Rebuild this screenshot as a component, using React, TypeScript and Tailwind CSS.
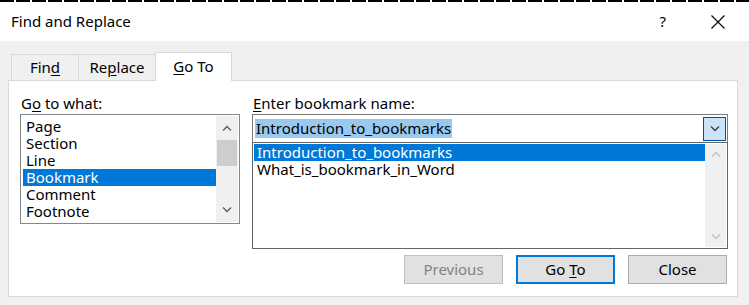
import React from "react";

const font = "font-['Segoe_UI','Noto_Sans','Open_Sans',sans-serif]";

function ChevUp({ color }: { color: string }) {
  return (
    <svg width="10" height="6" viewBox="0 0 10 6" fill="none">
      <path d="M1 5.5 L5 1.5 L9 5.5" stroke={color} strokeWidth="1.4" />
    </svg>
  );
}
function ChevDown({ color }: { color: string }) {
  return (
    <svg width="10" height="6" viewBox="0 0 10 6" fill="none">
      <path d="M1 0.5 L5 4.5 L9 0.5" stroke={color} strokeWidth="1.4" />
    </svg>
  );
}

export default function App() {
  const leftItems = ["Page", "Section", "Line", "Bookmark", "Comment", "Footnote"];
  return (
    <div className={`w-[749px] h-[305px] bg-[#f0f0f0] overflow-hidden text-[15px] text-black leading-none ${font}`}>
      {/* title bar */}
      <div className="h-[2px] bg-[repeating-linear-gradient(90deg,#000_0_14px,#fff_14px_16px)]" />
      <div className="h-[39px] bg-white flex items-center pl-[11px]">
        <span className="text-[15px]">Find and Replace</span>
        <span className="ml-auto mr-[45px] text-[15px]">?</span>
        <svg className="mr-[24px]" width="14" height="14" viewBox="0 0 14 14">
          <path d="M0.5 0.5 L13.5 13.5 M13.5 0.5 L0.5 13.5" stroke="#000" strokeWidth="1.1" />
        </svg>
      </div>

      {/* tabs */}
      <div className="mt-[11px] ml-[11px] flex items-end h-[28px] relative z-10">
        <div className="w-[68px] h-[26px] border border-b-0 border-[#d9d9d9] flex items-center justify-center">
          <span>Fin<span className="underline underline-offset-2">d</span></span>
        </div>
        <div className="w-[77px] h-[26px] border border-l-0 border-b-0 border-[#d9d9d9] flex items-center justify-center">
          <span>Re<span className="underline underline-offset-2">p</span>lace</span>
        </div>
        <div className="w-[77px] h-[29px] -mb-px -ml-px border border-b-0 border-[#d9d9d9] bg-white flex items-center justify-center pb-[2px]">
          <span><span className="underline underline-offset-2">G</span>o To</span>
        </div>
      </div>

      {/* panel */}
      <div className="ml-[8px] w-[730px] h-[217px] bg-white border border-[#d9d9d9] pl-[11px] pr-[9px] pt-[15px] flex flex-col">
        <div className="flex gap-[12px]">
          {/* left column */}
          <div className="w-[220px] flex flex-col">
            <div className="h-[18px] pl-[1px]">
              G<span className="underline underline-offset-2">o</span> to what:
            </div>
            <div className="h-[110px] border border-[#828790] flex">
              <div className="flex-1 pt-[3px] pl-[2px]">
                {leftItems.map((t) => (
                  <div
                    key={t}
                    className={`h-[17px] flex items-center pl-[3px] ${t === "Bookmark" ? "bg-[#0078d7] text-white" : ""}`}
                  >
                    {t}
                  </div>
                ))}
              </div>
              <div className="w-[22px] bg-[#f0f0f0] flex flex-col items-center my-px mr-px">
                <div className="h-[24px] flex items-center justify-center"><ChevUp color="#606060" /></div>
                <div className="w-[20px] h-[26px] bg-[#cdcdcd]" />
                <div className="flex-1" />
                <div className="h-[24px] flex items-center justify-center"><ChevDown color="#606060" /></div>
              </div>
            </div>
          </div>

          {/* right column */}
          <div className="flex-1 flex flex-col">
            <div className="h-[18px] pl-[1px]">
              <span className="underline underline-offset-2">E</span>nter bookmark name:
            </div>
            <div className="h-[28px] border border-[#7a7a7a] border-b-0 flex items-center">
              <div className="flex-1 pl-[2px]">
                <span className="bg-[#99c9ef] px-[1px] py-[2px] inline-block">Introduction_to_bookmarks</span>
              </div>
              <div className="w-[23px] h-[24px] mr-px bg-[#cce4f7] border border-[#005499] flex items-center justify-center">
                <ChevDown color="#404040" />
              </div>
            </div>
            <div className="h-[107px] border border-[#646464] flex">
              <div className="flex-1 pl-px pt-px">
                <div className="h-[17px] flex items-center pl-[3px] bg-[#0078d7] text-white">Introduction_to_bookmarks</div>
                <div className="h-[17px] flex items-center pl-[3px]">What_is_bookmark_in_Word</div>
              </div>
              <div className="w-[21px] bg-[#f0f0f0] flex flex-col items-center justify-between my-px mr-px py-[7px]">
                <ChevUp color="#c2c2c2" />
                <ChevDown color="#c2c2c2" />
              </div>
            </div>
            <div className="mt-[6px] flex justify-end gap-[13px] pr-px">
              <div className="w-[99px] h-[29px] bg-[#e1e1e1] border border-[#bfbfbf] text-[#838383] flex items-center justify-center">
                Previous
              </div>
              <div className="w-[99px] h-[29px] bg-[#e1e1e1] border-2 border-[#0078d7] flex items-center justify-center">
                <span>Go <span className="underline underline-offset-2">T</span>o</span>
              </div>
              <div className="w-[99px] h-[29px] bg-[#e1e1e1] border border-[#adadad] flex items-center justify-center">
                Close
              </div>
            </div>
          </div>
        </div>
      </div>
    </div>
  );
}
